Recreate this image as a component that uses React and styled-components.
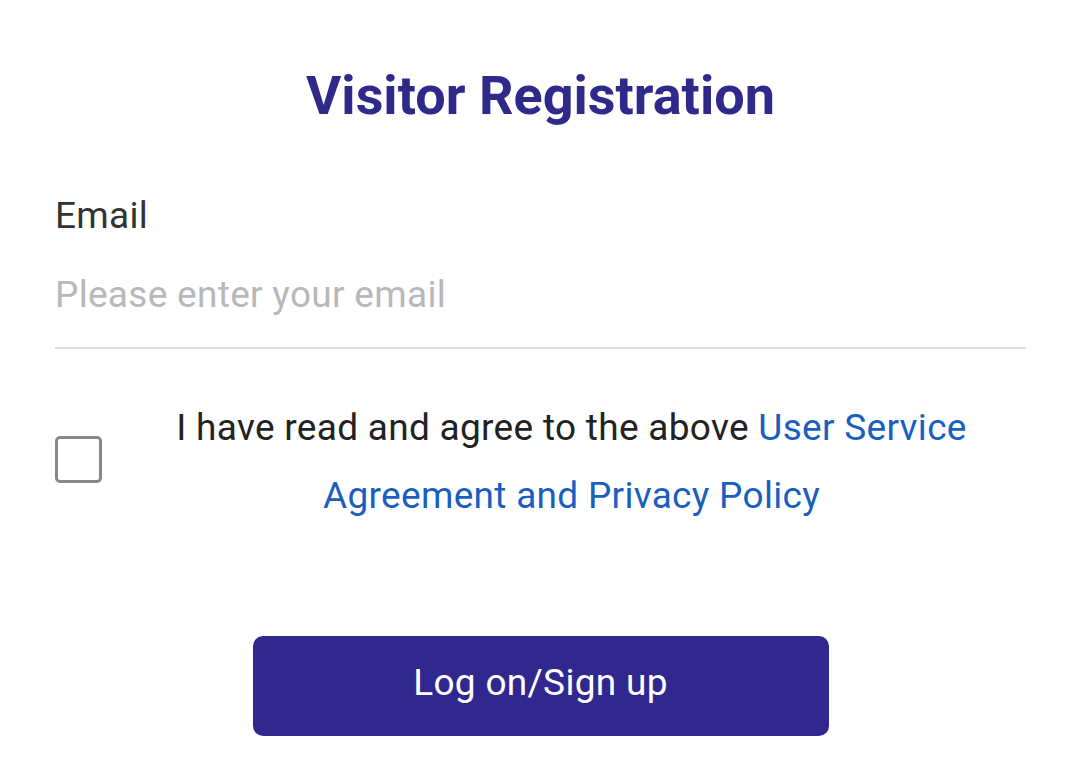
import React from "react";
import styled, { createGlobalStyle } from "styled-components";

const GlobalStyle = createGlobalStyle`
  html, body {
    margin: 0;
    padding: 0;
    background: #ffffff;
  }
  body {
    font-family: Roboto, "Liberation Sans", Arial, sans-serif;
  }
`;

const Page = styled.div`
  width: 1080px;
  height: 770px;
  box-sizing: border-box;
  padding: 60px 54px 0 55px;
  display: flex;
  flex-direction: column;
`;

const Title = styled.h1`
  margin: 0;
  text-align: center;
  font-size: 54px;
  line-height: 72px;
  font-weight: 700;
  color: #2f2a8a;
`;

const Field = styled.div`
  margin-top: 60px;
  display: flex;
  flex-direction: column;
`;

const Label = styled.label`
  font-size: 37px;
  letter-spacing: 0.3px;
  line-height: 48px;
  color: #333333;
`;

const Input = styled.input`
  margin-top: 31px;
  border: none;
  border-bottom: 2px solid #dcdcdc;
  padding: 0 0 28px 0;
  font-family: inherit;
  font-size: 37px;
  letter-spacing: 0.3px;
  line-height: 48px;
  color: #333333;
  outline: none;
  background: transparent;

  &::placeholder {
    color: #b8b8b8;
  }
`;

const AgreeRow = styled.div`
  margin-top: 40px;
  display: flex;
  align-items: center;
  gap: 15px;
`;

const Box = styled.span`
  flex: none;
  width: 41px;
  height: 41px;
  border: 3px solid #888888;
  border-radius: 5px;
`;

const AgreeText = styled.p`
  flex: 1;
  margin: 0;
  padding-top: 5px;
  text-align: center;
  font-size: 37px;
  letter-spacing: 0.3px;
  line-height: 68px;
  color: #222222;
`;

const Link = styled.a`
  color: #1a5fc0;
  text-decoration: none;
`;

const SubmitButton = styled.button`
  align-self: center;
  margin-top: 106px;
  width: 576px;
  height: 100px;
  padding: 0 0 8px 0;
  border: none;
  border-radius: 10px;
  background: #30288f;
  color: #ffffff;
  font-family: inherit;
  font-size: 37px;
  letter-spacing: 0.3px;
`;

export default function App() {
  return (
    <>
      <GlobalStyle />
      <Page>
        <Title>Visitor Registration</Title>
        <Field>
          <Label>Email</Label>
          <Input type="email" placeholder="Please enter your email" />
        </Field>
        <AgreeRow>
          <Box />
          <AgreeText>
            I have read and agree to the above{" "}
            <Link href="#">User Service Agreement and Privacy Policy</Link>
          </AgreeText>
        </AgreeRow>
        <SubmitButton>Log on/Sign up</SubmitButton>
      </Page>
    </>
  );
}
